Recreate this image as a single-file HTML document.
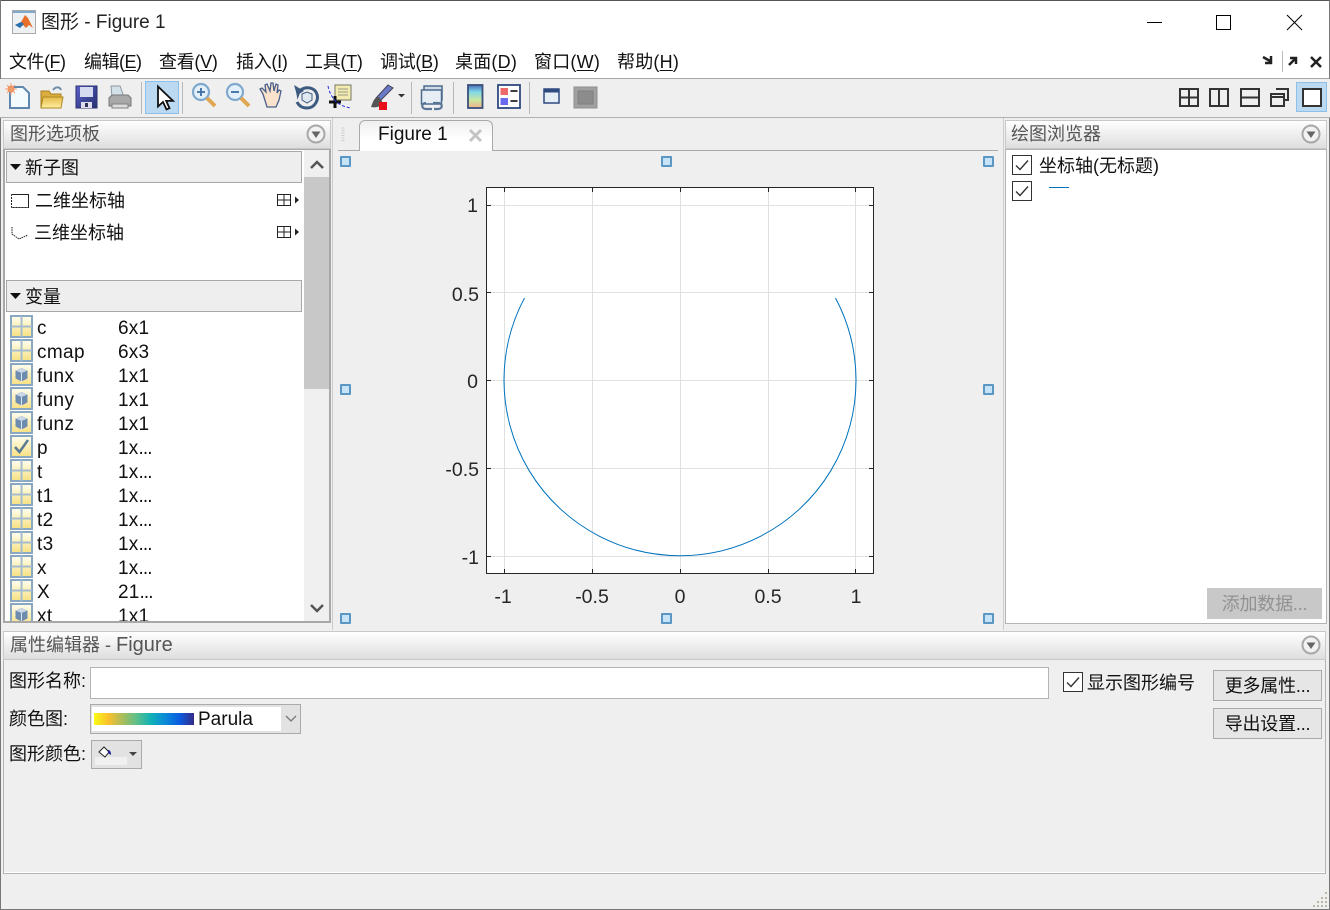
<!DOCTYPE html>
<html><head><meta charset="utf-8">
<style>
html,body{margin:0;padding:0}
body{width:1330px;height:910px;position:relative;overflow:hidden;background:#efefef;font-family:"Liberation Sans","Noto Sans CJK SC",sans-serif;font-size:18px;color:#111}
.a{position:absolute;white-space:nowrap}
.t{position:absolute;white-space:nowrap;line-height:24px;height:24px}
.title{position:absolute;background:linear-gradient(#fff,#dedede);border:1px solid #c8c8c8;box-sizing:border-box;color:#555;line-height:26px;padding-left:6px}
.sec{position:absolute;left:6px;width:296px;background:#eee;border:1px solid #a8a8a8;box-sizing:border-box}
.btn{position:absolute;background:#e6e6e6;border:1px solid #aaa;box-sizing:border-box;text-align:center;line-height:30px;letter-spacing:-.2px}
.cb{position:absolute;width:20px;height:20px;border:1px solid #333;background:#fff;box-sizing:border-box}
.h{position:absolute;width:11px;height:11px;background:#c6e3f7;border:2px solid #5b97c4;box-sizing:border-box;border-radius:1px}
u{text-underline-offset:2px}
svg{position:absolute;overflow:visible}
.m{position:absolute;top:50px;line-height:24px;white-space:nowrap;letter-spacing:-.3px}
.n{position:absolute;left:37px;line-height:24px;white-space:nowrap;font-size:19px;letter-spacing:.35px}
.v{position:absolute;left:118px;line-height:24px;white-space:nowrap;font-size:19px;letter-spacing:.2px}
.v i{font-style:normal;letter-spacing:-.9px}
</style></head><body>
<svg width="0" height="0" style="position:absolute"><defs>
<linearGradient id="y" x1="0" y1="0" x2="0" y2="1"><stop offset="0" stop-color="#fffff2"/><stop offset="1" stop-color="#f8e080"/></linearGradient>
<linearGradient id="pg" x1="0" y1="0" x2="0" y2="1"><stop offset="0" stop-color="#4a6fb8"/><stop offset=".3" stop-color="#7fd8e8"/><stop offset=".65" stop-color="#c8e8a0"/><stop offset="1" stop-color="#f5b088"/></linearGradient>
<linearGradient id="fd" x1="0" y1="0" x2="0" y2="1"><stop offset="0" stop-color="#e3b848"/><stop offset="1" stop-color="#fff0a0"/></linearGradient>
<linearGradient id="fl" x1="0" y1="0" x2="1" y2="1"><stop offset="0" stop-color="#5a60c8"/><stop offset="1" stop-color="#26306e"/></linearGradient>
<symbol id="g" viewBox="0 0 23 23"><rect x="1" y="1" width="21" height="21" fill="url(#y)" stroke="#8ba8c2" stroke-width="2"/><path d="M11.500 1v21M1 11.500h21" stroke="#a6bccf" stroke-width="2"/></symbol>
<symbol id="o" viewBox="0 0 23 23"><rect x="1" y="1" width="21" height="21" fill="url(#y)" stroke="#8ba8c2" stroke-width="2"/><path d="M5.500 7.500L11.500 5l6 2.500v8l-6 3-6-3z" fill="#6e8cb0"/><path d="M5.500 7.500l6 2.500 6-2.500-6-2.500z" fill="#c8d8e8"/><path d="M11.500 10v9" stroke="#dde6ef"/></symbol>
<symbol id="k" viewBox="0 0 23 23"><rect x="1" y="1" width="21" height="21" fill="url(#y)" stroke="#8ba8c2" stroke-width="2"/><path d="M5 12l4.500 5L18 5" fill="none" stroke="#5b7a94" stroke-width="2.500"/></symbol>
<symbol id="c" viewBox="0 0 20 20"><path d="M4 10.500l4 4L16 5.500" fill="none" stroke="#333" stroke-width="1.400"/></symbol>
<symbol id="d" viewBox="0 0 20 20"><circle cx="10" cy="10" r="8.500" fill="#f2f2f2" stroke="#a8a8a8" stroke-width="2"/><path d="M5.500 7.500h9L10 14z" fill="#666"/></symbol>
<symbol id="s" viewBox="0 0 22 12"><path d="M.5.5h13v11H.5zM7 .5v11M.5 6h13" fill="#fff" stroke="#222"/><path d="M18 2.500l4 3.500-4 3.500z" fill="#222"/></symbol>
</defs></svg>

<!-- window frame + title -->
<div class="a" style="left:0;top:0;width:1330px;height:79px;background:#fff;border-bottom:1px solid #a8a8a8;box-sizing:border-box"></div>
<div class="a" style="left:0;top:0;width:1330px;height:1px;background:#555"></div>
<div class="a" style="left:0;top:0;width:1px;height:910px;background:#777"></div>
<div class="a" style="left:1329px;top:0;width:1px;height:910px;background:#777"></div>
<div class="a" style="left:0;top:909px;width:1330px;height:1px;background:#777"></div>
<svg style="left:12px;top:10px" width="24" height="24"><rect x=".5" y=".5" width="23" height="23" fill="#eef1f4" stroke="#aaa"/><rect x="1" y="1" width="22" height="2" fill="#7fa8cc"/><path d="M3 15l6-3 4-7 3 3 5 10-4-3-3 3-3-3z" fill="#e8702a"/><path d="M3 15l6-3 3 2-4 4z" fill="#2a6fb0"/></svg>
<div class="t" style="left:41px;top:11px;font-size:19px;color:#222">图形 - Figure 1</div>
<svg style="left:1147px;top:15px" width="160" height="16"><path d="M0 7.500h15" stroke="#000"/><rect x="69.500" y=".5" width="14" height="14" fill="none" stroke="#000"/><path d="M140 0l15 15M155 0l-15 15" stroke="#000"/></svg>
<div class="m" style="left:9px;letter-spacing:-.5px">文件(<u>F</u>)</div>
<div class="m" style="left:84px;letter-spacing:-.5px">编辑(<u>E</u>)</div>
<div class="m" style="left:159px">查看(<u>V</u>)</div>
<div class="m" style="left:236px">插入(<u>I</u>)</div>
<div class="m" style="left:305px">工具(<u>T</u>)</div>
<div class="m" style="left:380px">调试(<u>B</u>)</div>
<div class="m" style="left:455px;letter-spacing:.2px">桌面(<u>D</u>)</div>
<div class="m" style="left:534px;letter-spacing:.2px">窗口(<u>W</u>)</div>
<div class="m" style="left:617px;letter-spacing:.2px">帮助(<u>H</u>)</div>
<svg style="left:1261px;top:50px" width="62" height="22"><path d="M2 7l7 4M10 6v7H4" fill="none" stroke="#222" stroke-width="2.500"/><path d="M21.500 1v21" stroke="#bbb"/><path d="M28 15l6-6M29 8h6v6" fill="none" stroke="#222" stroke-width="2.500"/><path d="M50 7l10 10M60 7L50 17" stroke="#222" stroke-width="2.500"/></svg>

<!-- toolbar -->
<div class="a" style="left:0;top:79px;width:1330px;height:39px;background:#efefef;border-bottom:1px solid #b0b0b0;box-sizing:border-box"></div>
<svg style="left:0;top:79px" width="610" height="38">
<rect x="145.500" y="2.500" width="33" height="32" fill="#bcd9f2" stroke="#8cc0ea"/>
<path d="M141.500 3v32M182.500 3v32M411.500 3v32M453.500 3v32M529.500 3v32" stroke="#b8b8b8"/>
<g style="filter:blur(.35px)">
<path d="M10 8h13l6 6v15H10z" fill="#f4fbff" stroke="#5f86ad" stroke-width="2"/><circle cx="11" cy="10" r="3.500" fill="#ee8855"/><path d="M5 10h12M11 4v12M7 6l8 8M15 6l-8 8" stroke="#f0a070"/>
<path d="M41 12h8l2 3h10v14H41z" fill="#d9ad3e" stroke="#a8801c"/><path d="M41 29l2-11h20l-2 11z" fill="url(#fd)" stroke="#b08a20"/><path d="M53 11c3-4 7-3 8 0" fill="none" stroke="#6f8fa8" stroke-width="2"/>
<rect x="76" y="7" width="21" height="22" fill="url(#fl)" stroke="#2a3070"/><rect x="80" y="8" width="13" height="10" fill="#d5daf0"/><rect x="81" y="23" width="11" height="6" fill="#dde"/><rect x="85" y="24" width="3" height="4" fill="#335"/>
<path d="M112 18l-1-11h9l4 11z" fill="#d4e0e8" stroke="#8a9aa6"/><path d="M109 19l3-3h16l3 3v8h-22z" fill="#a8a8a8" stroke="#777"/><path d="M112 25h16v4h-16z" fill="#dcdcdc" stroke="#7f7f7f"/>
<path d="M158 7.500v20l5-4.500 3.500 7.500 3-1.300-3.300-7.300h6.800z" fill="#fff" stroke="#111" stroke-width="1.800"/>
<circle cx="201" cy="13" r="8" fill="#e3f0fa" stroke="#7fa8cc" stroke-width="2.200"/><path d="M207 19l8 8" stroke="#e0a650" stroke-width="4"/><path d="M197 13h8M201 9v8" stroke="#3a6ea5" stroke-width="1.800"/>
<circle cx="235" cy="13" r="8" fill="#e3f0fa" stroke="#7fa8cc" stroke-width="2.200"/><path d="M241 19l8 8" stroke="#e0a650" stroke-width="4"/><path d="M231 13h8" stroke="#3a6ea5" stroke-width="1.800"/>
<path d="M263 15l-3-5 2-1 4 4-1-7 2-1 3 7 1-8h2l1 8 2-7 2 1-1 8 2-3 2 1-2 9-3 7h-9z" fill="#fbe2cc" stroke="#4a5f8a" stroke-width="1.300"/>
<path d="M297 9l1 6c3-8 14-8 18-2 4 7-1 16-9 16-5 0-8-2-10-6" fill="none" stroke="#3d5a80" stroke-width="3"/><path d="M294 6l3 10 7-4z" fill="#3d5a80"/><path d="M302 15l5-2 5 2v6l-5 3-5-3z" fill="#e0e8f0" stroke="#3d5a80"/>
<rect x="335" y="6" width="16" height="15" fill="#f2ecb0" stroke="#776"/><path d="M338 10h10M338 13h10M338 16h10" stroke="#998"/><path d="M329 23h12M335 17v12" stroke="#111" stroke-width="3"/><path d="M328 7c2 10 8 20 23 22" fill="none" stroke="#2030e0" stroke-dasharray="3 2"/>
<path d="M388 6l-12 13 4 3 13-13z" fill="#6a7ac8" stroke="#445"/><path d="M379 18c-5 0-6 5-8 10 5 1 11 0 11-6z" fill="#555"/><rect x="379" y="23" width="8" height="8" fill="#e8101a"/>
<path d="M398 15h7l-3.500 3.500z" fill="#333"/>
<rect x="424" y="7" width="18" height="14" fill="#cfdbe8" stroke="#4d6a8c" stroke-width="1.500"/><rect x="421.500" y="11" width="20" height="14" fill="#e6edf4" stroke="#4d6a8c" stroke-width="1.500"/><path d="M426 24c-5 0-5 6 0 6h6M433 24h5c5 0 5 6 0 6h-4" fill="none" stroke="#5a7696" stroke-width="2.200"/>
<rect x="468" y="6" width="14.500" height="23" fill="url(#pg)" stroke="#3a4f7a" stroke-width="1.800"/>
<rect x="498" y="6" width="22" height="23" fill="#fff" stroke="#2f4a80" stroke-width="1.800"/><rect x="500.500" y="9" width="7.500" height="7" fill="#ee6a6a"/><rect x="500.500" y="19" width="7.500" height="7" fill="#6a6aee"/><path d="M510.500 12h7M510.500 22h7" stroke="#222" stroke-width="1.800"/>
<rect x="544" y="10" width="15" height="14" fill="#e6eef5" stroke="#2f4a80" stroke-width="1.500"/><rect x="544" y="10" width="15" height="3.500" fill="#2f4a80"/>
<rect x="574" y="8" width="23" height="21" fill="#a0a0a0" stroke="#8f8f8f"/><rect x="578" y="12" width="15" height="13" fill="#8c8c8c" stroke="#7f7f7f"/>
</g>
</svg>
<!-- layout buttons -->
<div class="a" style="left:1296px;top:82px;width:31px;height:30px;background:#bcd9f2;border:1px solid #8cc0ea;box-sizing:border-box"></div>
<svg style="left:1178px;top:87px" width="145" height="21" fill="none" stroke="#333" stroke-width="2">
<path d="M2 2h18v17H2zM11 2v17M2 10.500h18"/><path d="M32 2h18v17H32zM41 2v17"/><path d="M63 2h18v17H63zM63 10.500h18"/><path d="M98 2h12v11h-4M93 7h13v12H93zM93 10h13"/><path d="M125 2h18v17h-18z" fill="#fff"/>
</svg>

<!-- left panel -->
<div class="title" style="left:3px;top:120px;width:328px;height:29px">图形选项板</div>
<svg style="left:306px;top:124px" width="20" height="20"><use href="#d" width="20" height="20"/></svg>
<div class="a" style="left:3px;top:149px;width:328px;height:474px;background:#fff;border:2px solid #a8a8a8;border-top:1px solid #a8a8a8;box-sizing:border-box;overflow:hidden">
<div class="a" style="left:299px;top:0;width:25px;height:472px;background:#f0f0f0"></div>
<div class="a" style="left:299px;top:27px;width:25px;height:212px;background:#c8c8c8"></div>
<svg style="left:304px;top:9px" width="16" height="12"><path d="M2 9l6-6 6 6" fill="none" stroke="#555" stroke-width="2.500"/></svg>
<svg style="left:304px;top:452px" width="16" height="12"><path d="M2 3l6 6 6-6" fill="none" stroke="#555" stroke-width="2.500"/></svg>
<div class="sec" style="left:1px;top:1px;height:32px"></div>
<div class="sec" style="left:1px;top:130px;height:32px"></div>
<svg style="left:5px;top:14px" width="12" height="8"><path d="M0 0h11L5.500 6z" fill="#111"/></svg>
<svg style="left:5px;top:143px" width="12" height="8"><path d="M0 0h11L5.500 6z" fill="#111"/></svg>
<div class="t" style="left:20px;top:6px">新子图</div>
<div class="t" style="left:20px;top:135px">变量</div>
<svg style="left:5px;top:43px" width="20" height="17"><path d="M1.500 1.500h17v13h-17v-13" fill="none" stroke="#222"/><path d="M1.500 3v12h16" fill="none" stroke="#fff" stroke-dasharray="1 2"/></svg>
<svg style="left:5px;top:75px" width="20" height="17"><path d="M2 2v7l7 5 9-4" fill="none" stroke="#222" stroke-dasharray="1.500 .8"/></svg>
<div class="t" style="left:30px;top:39px">二维坐标轴</div>
<div class="t" style="left:29px;top:71px">三维坐标轴</div>
<svg style="left:272px;top:44px" width="22" height="12"><use href="#s" width="22" height="12"/></svg>
<svg style="left:272px;top:76px" width="22" height="12"><use href="#s" width="22" height="12"/></svg>
<svg style="left:5px;top:165px" width="23" height="312">
<use href="#g" y="0" width="23" height="23"/><use href="#g" y="24" width="23" height="23"/><use href="#o" y="48" width="23" height="23"/><use href="#o" y="72" width="23" height="23"/><use href="#o" y="96" width="23" height="23"/><use href="#k" y="120" width="23" height="23"/><use href="#g" y="144" width="23" height="23"/><use href="#g" y="168" width="23" height="23"/><use href="#g" y="192" width="23" height="23"/><use href="#g" y="216" width="23" height="23"/><use href="#g" y="240" width="23" height="23"/><use href="#g" y="264" width="23" height="23"/><use href="#o" y="288" width="23" height="23"/></svg>
</div>
<div class="a" style="left:0;top:0;width:331px;height:621px;overflow:hidden;pointer-events:none">
<div class="n" style="top:317px">c</div><div class="v" style="top:317px">6x1</div>
<div class="n" style="top:341px">cmap</div><div class="v" style="top:341px">6x3</div>
<div class="n" style="top:365px">funx</div><div class="v" style="top:365px">1x1</div>
<div class="n" style="top:389px">funy</div><div class="v" style="top:389px">1x1</div>
<div class="n" style="top:413px">funz</div><div class="v" style="top:413px">1x1</div>
<div class="n" style="top:437px">p</div><div class="v" style="top:437px">1x<i>...</i></div>
<div class="n" style="top:461px">t</div><div class="v" style="top:461px">1x<i>...</i></div>
<div class="n" style="top:485px">t1</div><div class="v" style="top:485px">1x<i>...</i></div>
<div class="n" style="top:509px">t2</div><div class="v" style="top:509px">1x<i>...</i></div>
<div class="n" style="top:533px">t3</div><div class="v" style="top:533px">1x<i>...</i></div>
<div class="n" style="top:557px">x</div><div class="v" style="top:557px">1x<i>...</i></div>
<div class="n" style="top:581px">X</div><div class="v" style="top:581px">21<i>...</i></div>
<div class="n" style="top:605px">xt</div><div class="v" style="top:605px">1x1</div>
</div>

<!-- center -->
<div class="a" style="left:332px;top:118px;width:1px;height:512px;background:#ccc"></div>
<div class="a" style="left:1003px;top:118px;width:1px;height:512px;background:#ccc"></div>
<div class="a" style="left:338px;top:150px;width:660px;height:1px;background:#aaa"></div>
<svg style="left:341px;top:127px" width="4" height="16"><path d="M.5 1h3M.5 3.500h3M.5 6h3M.5 8.500h3M.5 11h3M.5 13.500h3" stroke="#ccc"/></svg>
<div class="a" style="left:359px;top:120px;width:134px;height:31px;background:linear-gradient(#efefef,#fff 60%);border:1px solid #aaa;border-bottom:0;border-radius:6px 6px 0 0;box-sizing:border-box"></div>
<div class="t" style="left:378px;top:123px;font-size:19px">Figure 1</div>
<svg style="left:468px;top:128px" width="15" height="15"><path d="M2 2l11 11M13 2L2 13" stroke="#c4c4c4" stroke-width="3"/></svg>
<div class="h" style="left:340px;top:156px"></div><div class="h" style="left:661px;top:156px"></div><div class="h" style="left:983px;top:156px"></div>
<div class="h" style="left:340px;top:384px"></div><div class="h" style="left:983px;top:384px"></div>
<div class="h" style="left:340px;top:613px"></div><div class="h" style="left:661px;top:613px"></div><div class="h" style="left:983px;top:613px"></div>

<svg style="left:0;top:0" width="1330" height="910">
<rect x="486.500" y="187.500" width="387" height="386" fill="#fff"/>
<path d="M504.500 188v385M592.500 188v385M680.500 188v385M768.500 188v385M855.500 188v385M487 205.500h386M487 292.500h386M487 380.500h386M487 468.500h386M487 556.500h386" stroke="#e0e0e0"/>
<rect x="486.500" y="187.500" width="387" height="386" fill="none" stroke="#262626"/>
<path d="M504.500 188v4M592.500 188v4M680.500 188v4M768.500 188v4M855.500 188v4M504.500 573v-4M592.500 573v-4M680.500 573v-4M768.500 573v-4M855.500 573v-4M487 205.500h4M487 292.500h4M487 380.500h4M487 468.500h4M487 556.500h4M873 205.500h-4M873 292.500h-4M873 380.500h-4M873 468.500h-4M873 556.500h-4" stroke="#262626"/>
<path d="M835.500 298A176 175.500 0 1 1 524.500 298" fill="none" stroke="#0072bd" stroke-width="1"/>
<g font-family="Liberation Sans,sans-serif" font-size="19.500" fill="#262626" text-anchor="end">
<text x="478" y="212">1</text><text x="479" y="301">0.5</text><text x="478" y="388">0</text><text x="479" y="476">-0.5</text><text x="479" y="564">-1</text></g>
<g font-family="Liberation Sans,sans-serif" font-size="19.500" fill="#262626" text-anchor="middle">
<text x="503" y="603">-1</text><text x="592" y="603">-0.5</text><text x="680" y="603">0</text><text x="768" y="603">0.5</text><text x="856" y="603">1</text></g>
</svg>

<!-- right panel -->
<div class="title" style="left:1005px;top:120px;width:322px;height:29px;padding-left:5px">绘图浏览器</div>
<svg style="left:1301px;top:124px" width="20" height="20"><use href="#d" width="20" height="20"/></svg>
<div class="a" style="left:1005px;top:149px;width:322px;height:475px;background:#fff;border:1px solid #b4b4b4;box-sizing:border-box"></div>
<div class="cb" style="left:1012px;top:155px"></div><svg style="left:1012px;top:155px" width="20" height="20"><use href="#c" width="20" height="20"/></svg>
<div class="cb" style="left:1012px;top:181px"></div><svg style="left:1012px;top:181px" width="20" height="20"><use href="#c" width="20" height="20"/></svg>
<div class="t" style="left:1039px;top:154px">坐标轴(无标题)</div>
<div class="a" style="left:1049px;top:187px;width:20px;height:1px;background:#0072bd"></div>
<div class="btn" style="left:1207px;top:588px;width:115px;height:31px;background:#c8c8c8;border-color:#c8c8c8;color:#929292">添加数据...</div>

<!-- property editor -->
<div class="title" style="left:3px;top:631px;width:1323px;height:29px">属性编辑器 - <span style="font-size:20px">Figure</span></div>
<svg style="left:1301px;top:635px" width="20" height="20"><use href="#d" width="20" height="20"/></svg>
<div class="a" style="left:3px;top:660px;width:1323px;height:214px;border:1px solid #b4b4b4;border-top:0;box-sizing:border-box;box-shadow:inset 0 -1px 0 #fff"></div>
<div class="t" style="left:9px;top:669px">图形名称:</div>
<div class="a" style="left:90px;top:667px;width:959px;height:32px;background:#fff;border:1px solid #b4b4b4;box-sizing:border-box"></div>
<div class="t" style="left:9px;top:707px">颜色图:</div>
<div class="a" style="left:90px;top:704px;width:211px;height:30px;background:#e2e2e2;border:1px solid #aaa;box-sizing:border-box"></div>
<div class="a" style="left:92px;top:707px;width:189px;height:24px;background:#fff"></div>
<div class="a" style="left:94px;top:713px;width:100px;height:12px;background:linear-gradient(90deg,#f9fb15,#fbc02c,#a9bd5c,#5cc08a,#10b0b8,#0a8ad8,#0b5ce0,#352a87)"></div>
<div class="t" style="left:198px;top:708px;font-size:19px">Parula</div>
<svg style="left:284px;top:714px" width="14" height="9"><path d="M2 2l5 5 5-5" fill="none" stroke="#777" stroke-width="1.300"/></svg>
<div class="t" style="left:9px;top:742px">图形颜色:</div>
<div class="a" style="left:91px;top:740px;width:51px;height:29px;background:#e2e2e2;border:1px solid #aaa;box-sizing:border-box"></div>
<div class="a" style="left:95px;top:757px;width:32px;height:8px;background:#f0f0f0"></div>
<svg style="left:97px;top:745px" width="16" height="14"><path d="M2 7l5-5 5 5-4 5z" fill="#fff" stroke="#222"/><path d="M11 5c2 0 3 2 3 5l-3-2z" fill="#1a1a90"/></svg>
<svg style="left:129px;top:752px" width="9" height="5"><path d="M0 0h8L4 4z" fill="#444"/></svg>
<div class="cb" style="left:1063px;top:672px"></div><svg style="left:1063px;top:672px" width="20" height="20"><use href="#c" width="20" height="20"/></svg>
<div class="t" style="left:1087px;top:671px">显示图形编号</div>
<div class="btn" style="left:1213px;top:670px;width:109px;height:31px">更多属性...</div>
<div class="btn" style="left:1213px;top:708px;width:109px;height:31px">导出设置...</div>
<svg style="left:1312px;top:892px" width="16" height="16" fill="#b8b8a4"><rect x="13" y="0" width="2" height="2"/><rect x="9" y="5" width="2" height="2"/><rect x="13" y="5" width="2" height="2"/><rect x="5" y="9" width="2" height="2"/><rect x="9" y="9" width="2" height="2"/><rect x="13" y="9" width="2" height="2"/><rect x="1" y="13" width="2" height="2"/><rect x="5" y="13" width="2" height="2"/><rect x="9" y="13" width="2" height="2"/><rect x="13" y="13" width="2" height="2"/></svg>
</body></html>
